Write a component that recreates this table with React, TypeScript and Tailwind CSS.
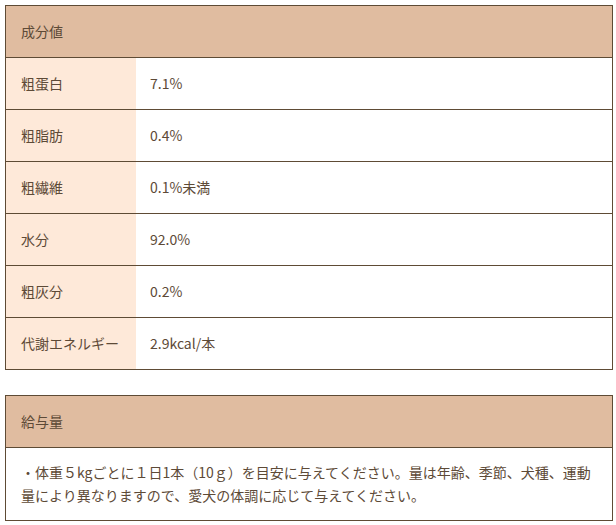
import React from 'react';

const rows = [
  { label: '粗蛋白', value: '7.1%' },
  { label: '粗脂肪', value: '0.4%' },
  { label: '粗繊維', value: '0.1%未満' },
  { label: '水分', value: '92.0%' },
  { label: '粗灰分', value: '0.2%' },
  { label: '代謝エネルギー', value: '2.9kcal/本' },
];

export default function App() {
  return (
    <div className="bg-white min-h-screen pt-[5px] pl-[5px] text-[14px] text-[#5d4a37]" style={{ fontFamily: '"Noto Sans CJK JP", "Noto Sans", sans-serif' }}>
      <div className="w-[608px] border border-[#5e4b35]">
        <div className="h-[52px] flex items-center pl-[15px] bg-[#e0bca0] border-b border-[#5e4b35]">成分値</div>
        {rows.map((row, i) => (
          <div key={row.label} className={`flex ${i < rows.length - 1 ? 'h-[52px] border-b border-[#5e4b35]' : 'h-[51px]'}`}>
            <div className="w-[130px] flex items-center pl-[15px] bg-[#fee9d9]">{row.label}</div>
            <div className="flex-1 flex items-center pl-[14px]">{row.value}</div>
          </div>
        ))}
      </div>

      <div className="w-[608px] mt-[25px] border border-[#5e4b35]">
        <div className="h-[52px] flex items-center pl-[15px] bg-[#e0bca0] border-b border-[#5e4b35]">給与量</div>
        <div className="px-[15px] py-[13px] leading-[23px]">
          ・体重５kgごとに１日1本（10ｇ）を目安に与えてください。量は年齢、季節、犬種、運動量により異なりますので、愛犬の体調に応じて与えてください。
        </div>
      </div>
    </div>
  );
}
